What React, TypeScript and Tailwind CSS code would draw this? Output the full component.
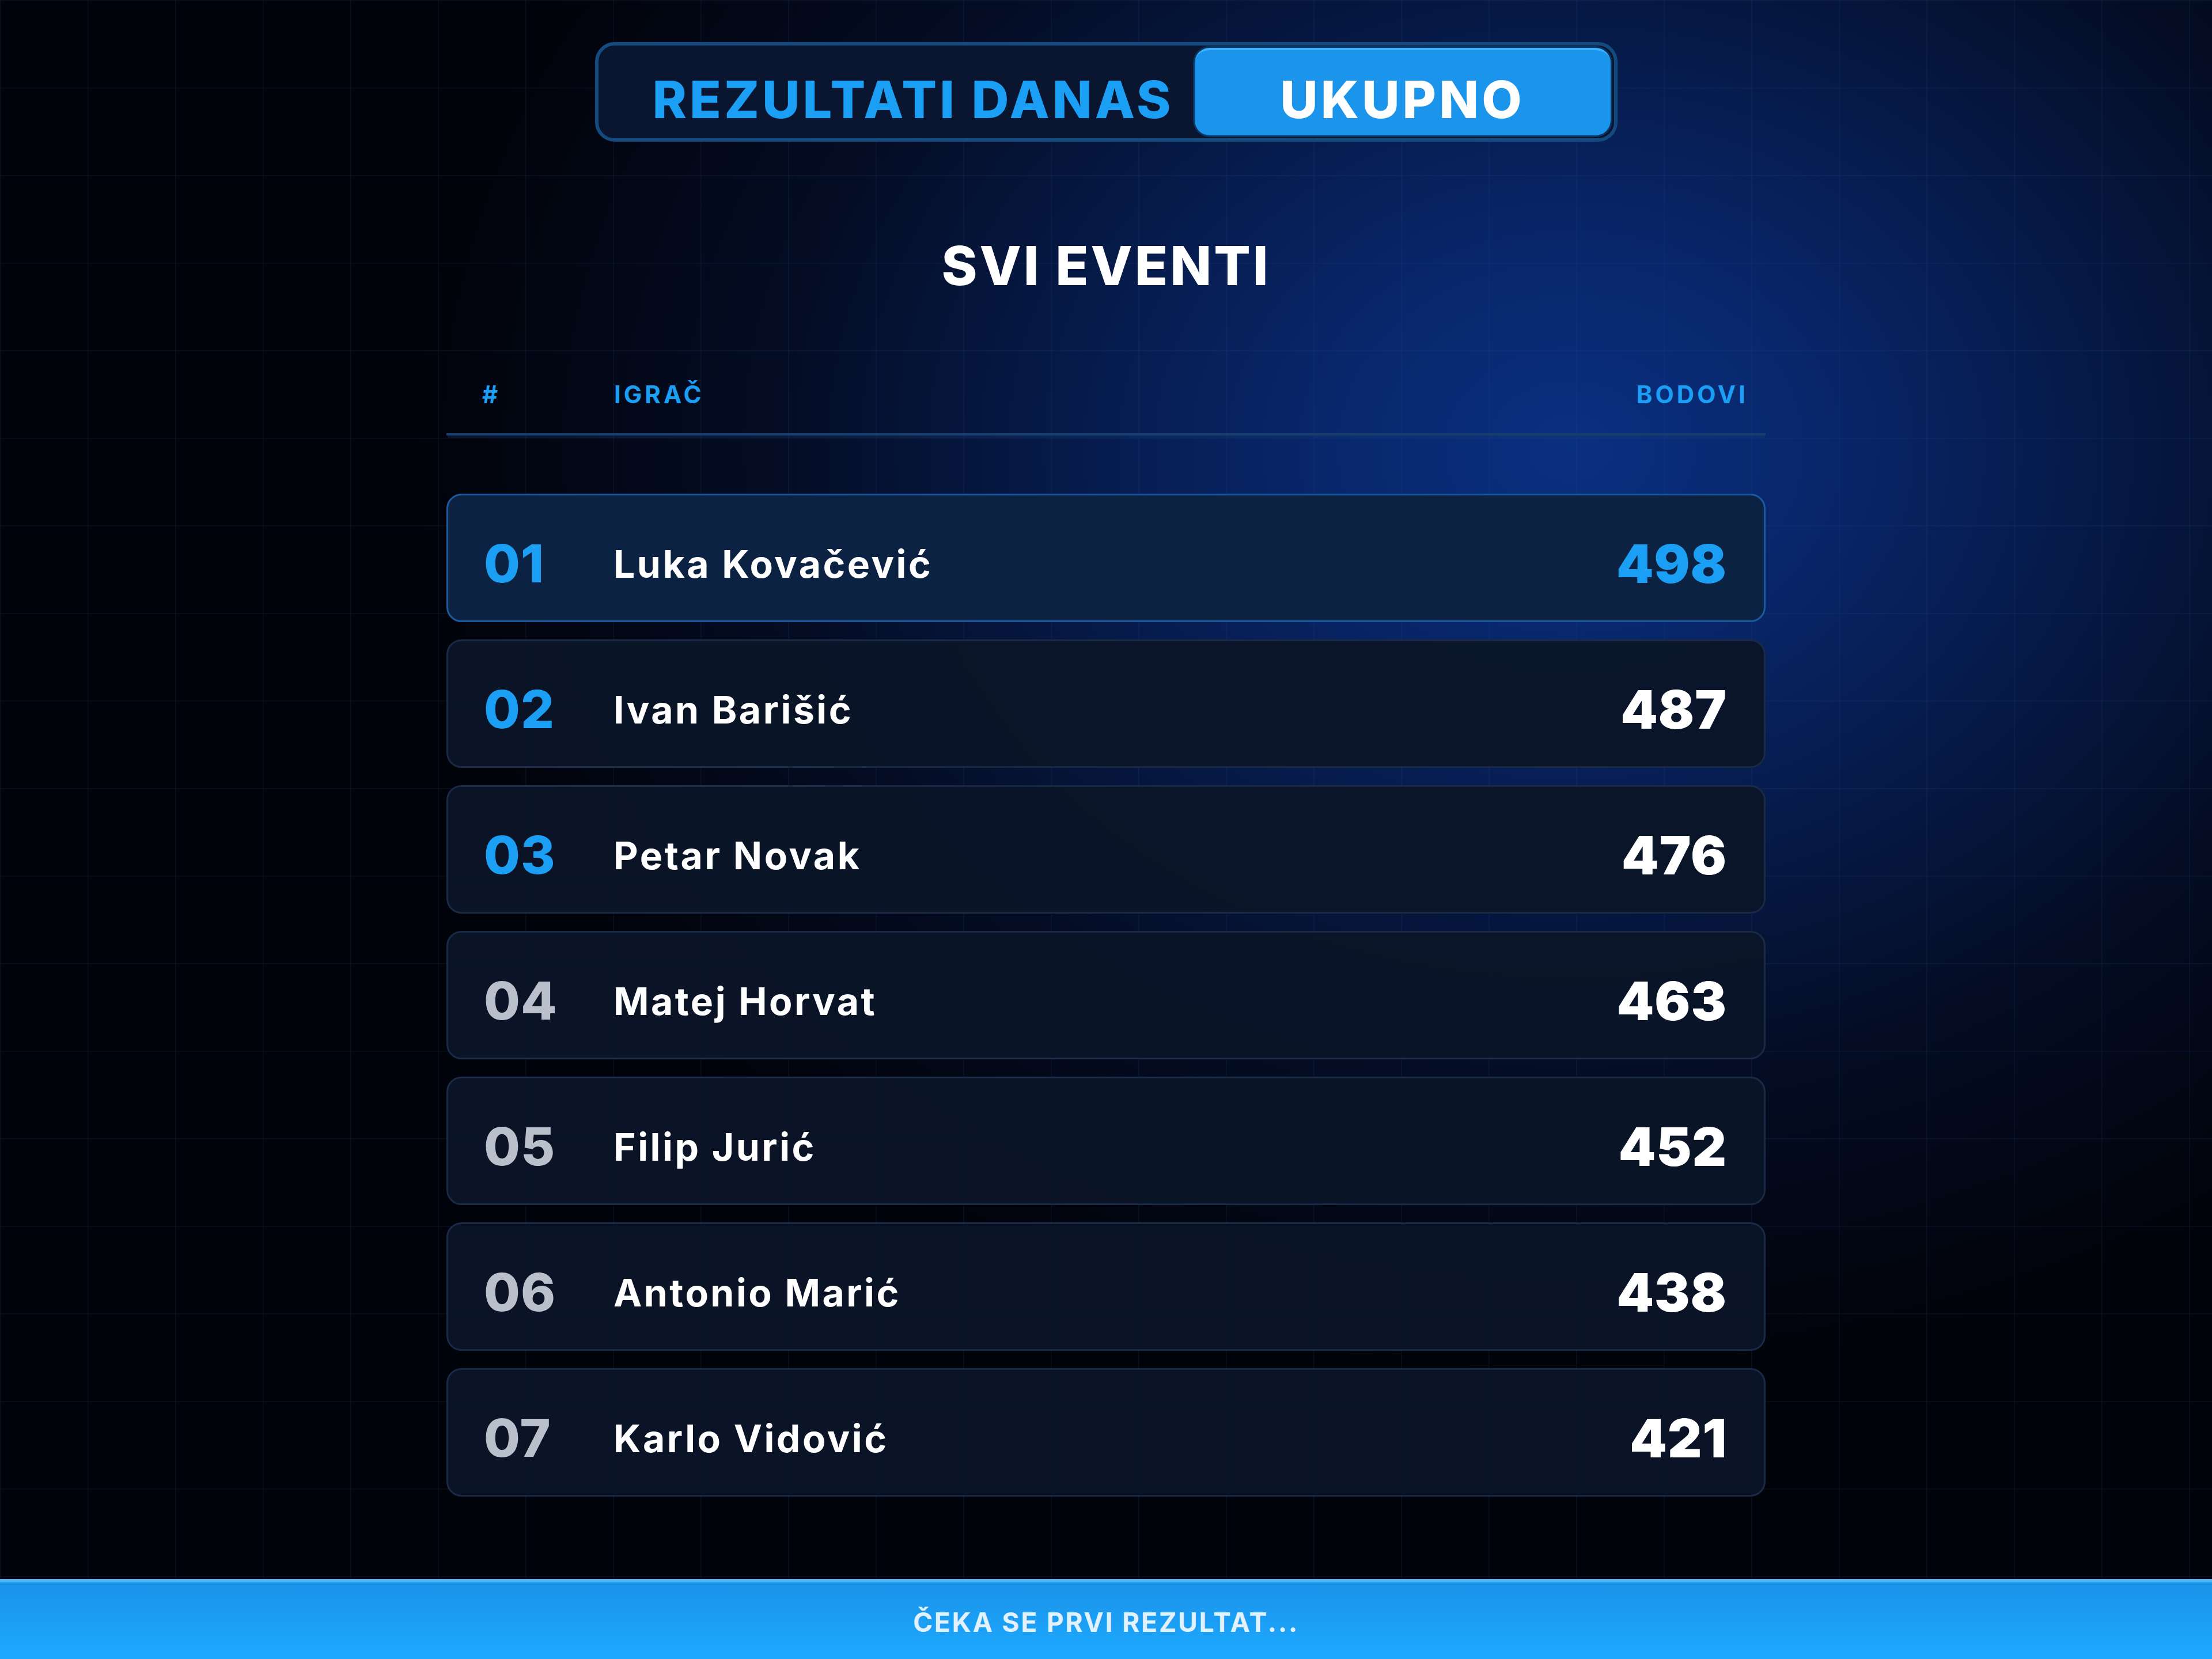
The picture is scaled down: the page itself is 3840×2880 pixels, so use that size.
import React from "react";

type Row = { rank: string; name: string; score: number };

const rows: Row[] = [
  { rank: "01", name: "Luka Kovačević", score: 498 },
  { rank: "02", name: "Ivan Barišić", score: 487 },
  { rank: "03", name: "Petar Novak", score: 476 },
  { rank: "04", name: "Matej Horvat", score: 463 },
  { rank: "05", name: "Filip Jurić", score: 452 },
  { rank: "06", name: "Antonio Marić", score: 438 },
  { rank: "07", name: "Karlo Vidović", score: 421 },
];

function LeaderRow({ row, index }: { row: Row; index: number }) {
  const first = index === 0;
  const top3 = index < 3;
  return (
    <div
      className={
        first
          ? "flex h-[223px] items-center rounded-[26px] border-[3px] border-[#1b5aa0] bg-[#0c2242] pl-[62px] pr-[64px] pt-[20px]"
          : "flex h-[223px] items-center rounded-[26px] border-[3px] border-[#1a2a45] bg-[#0b1528]/95 pl-[62px] pr-[64px] pt-[20px]"
      }
    >
      <div
        className={
          top3
            ? "w-[225px] text-[91px] font-extrabold leading-none tracking-[1px] text-[#1a9ff5]"
            : "w-[225px] text-[91px] font-extrabold leading-none tracking-[1px] text-[#b9c0cc]"
        }
      >
        {row.rank}
      </div>
      <div className="flex-1 text-[66px] font-bold leading-none tracking-[3.5px] text-white">
        {row.name}
      </div>
      <div
        className={
          first
            ? "text-[92px] font-black leading-none tracking-[1px] text-[#1a9ff5]"
            : "text-[92px] font-black leading-none tracking-[1px] text-white"
        }
      >
        {row.score}
      </div>
    </div>
  );
}

export default function App() {
  return (
    <div className="relative flex h-[2880px] w-[3840px] flex-col overflow-hidden bg-[#02050c] font-['Inter',sans-serif] bg-[image:radial-gradient(ellipse_2000px_1600px_at_71%_27%,#0a3080_0%,#08266a_22%,#061a48_45%,#040d25_68%,#01030a_100%)]">
      <div className="pointer-events-none absolute inset-0 bg-[image:linear-gradient(to_right,rgba(50,90,170,0.10)_2px,transparent_2px),linear-gradient(to_bottom,rgba(50,90,170,0.10)_2px,transparent_2px)] bg-[size:152px_152px]" />

      <main className="relative flex flex-1 flex-col items-center pt-[73px]">
        <div className="flex h-[173px] w-[1775px] rounded-[34px] border-[6px] border-[#134a7f] bg-[#0a1630] pb-[5px] pr-[6px] pt-[4px]">
          <button className="flex flex-1 items-center pl-[94px] pt-[28px] text-[90px] font-extrabold leading-none tracking-[5px] text-[#1a9ff5]">
            REZULTATI DANAS
          </button>
          <button className="flex w-[722px] items-center justify-center rounded-[26px] border-t-[4px] border-[#3fb2ff] bg-[#1b95ec] pt-[24px] text-[90px] font-extrabold leading-none tracking-[5px] text-white shadow-[0_0_0_3px_#0d3360]">
            UKUPNO
          </button>
        </div>

        <h1 className="mt-[168px] text-[94px] font-extrabold leading-none tracking-[4px] text-white">
          SVI EVENTI
        </h1>

        <div className="mt-[156px] w-[2290px]">
          <div className="flex items-center border-b-[4px] border-[#163d6d] pb-[46px] pl-[62px] pr-[30px] text-[42px] font-bold leading-none tracking-[5px] text-[#1a9ff5] shadow-[0_6px_0_-2px_rgba(22,61,109,0.35)]">
            <div className="w-[229px]">#</div>
            <div className="flex-1">IGRAČ</div>
            <div>BODOVI</div>
          </div>

          <div className="mt-[101px] flex flex-col gap-[30px]">
            {rows.map((r, i) => (
              <LeaderRow key={r.rank} row={r} index={i} />
            ))}
          </div>
        </div>
      </main>

      <footer className="relative flex h-[139px] items-center justify-center border-t-[6px] border-[#4fb4f6] bg-[image:linear-gradient(to_bottom,#1a92e8,#1caaff)] pt-[4px]">
        <span className="text-[46px] font-bold leading-none tracking-[2.8px] text-[#e2f1fc]">
          ČEKA SE PRVI REZULTAT...
        </span>
      </footer>
    </div>
  );
}
